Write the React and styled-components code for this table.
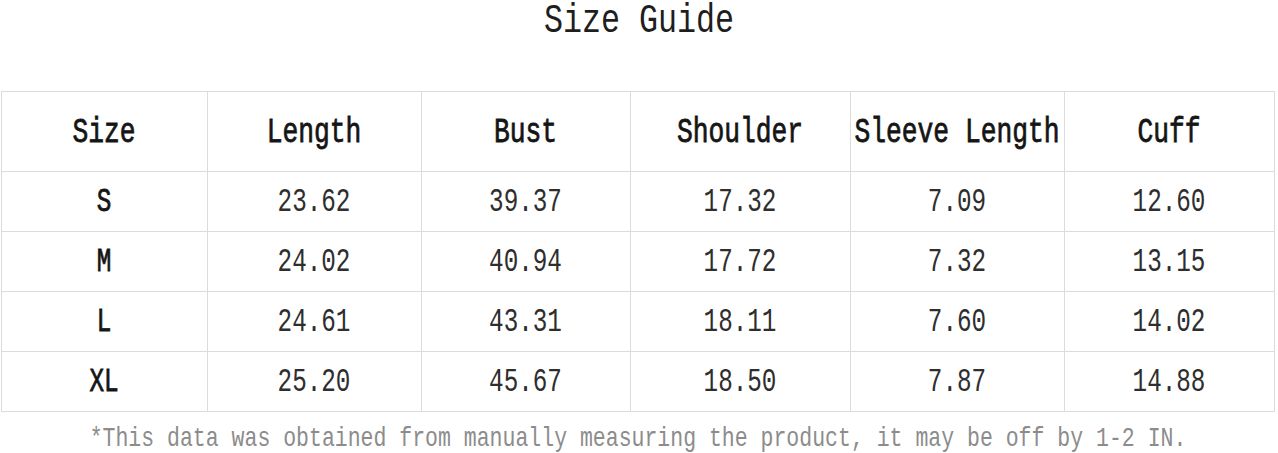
import React from 'react'
import styled, { createGlobalStyle } from 'styled-components'

const Global = createGlobalStyle`
    body {
        margin: 0;
        background: #ffffff;
        font-family: "Liberation Mono", "DejaVu Sans Mono", monospace;
    }
`

const Page = styled.div`
    width: 1278px;
    height: 453px;
    display: flex;
    flex-direction: column;
    align-items: center;
`

const Title = styled.h1`
    margin: 0;
    height: 91px;
    padding-top: 9px;
    box-sizing: border-box;
    font-size: 31.7px;
    font-weight: normal;
    line-height: 26px;
    color: #1e1e1e;
`

// the shot uses a condensed typewriter face, so stretch the glyphs upward
const Tall = styled.span`
    display: inline-block;
    white-space: pre;
    line-height: ${p => p.$lh || '22px'};
    transform: scaleY(${p => p.$stretch || 1.35});
`

const Table = styled.div`
    display: grid;
    grid-template-columns: 206px 214px 209px 220px 214px 210px;
    grid-template-rows: 80px repeat(4, 60px);
    border-top: 1px solid #dcdcdc;
    border-left: 1px solid #dcdcdc;
    margin-left: -3px;
`

const Cell = styled.div`
    display: flex;
    align-items: center;
    justify-content: center;
    border-right: 1px solid #dcdcdc;
    border-bottom: 1px solid #dcdcdc;
    font-size: ${p => (p.$head ? '26.3px' : '24.3px')};
    color: ${p => (p.$strong ? '#151515' : '#2e2e2e')};
    -webkit-text-stroke: ${p => (p.$strong ? '0.6px #151515' : '0')};
    padding-top: ${p => (p.$head ? '2px' : '3px')};
    box-sizing: border-box;
`

const Note = styled.p`
    margin: 17px 0 0;
    font-size: 21.5px;
    line-height: 18px;
    color: #8c8c8c;
    margin-left: -2px;
`

const heads = ['Size', 'Length', 'Bust', 'Shoulder', 'Sleeve Length', 'Cuff']

const rows = [
    ['S', '23.62', '39.37', '17.32', '7.09', '12.60'],
    ['M', '24.02', '40.94', '17.72', '7.32', '13.15'],
    ['L', '24.61', '43.31', '18.11', '7.60', '14.02'],
    ['XL', '25.20', '45.67', '18.50', '7.87', '14.88'],
]

export default function App() {
    return <>
        <Global />
        <Page>
            <Title><Tall $stretch={1.3} $lh="26px">Size Guide</Tall></Title>
            <Table>
                {heads.map(h => <Cell $head $strong key={h}><Tall>{h}</Tall></Cell>)}
                {rows.map(r => r.map((v, i) => (
                    <Cell key={r[0] + i} $strong={i === 0}>
                        <Tall>{v}</Tall>
                    </Cell>
                )))}
            </Table>
            <Note><Tall $stretch={1.25} $lh="18px">*This data was obtained from manually measuring the product, it may be off by 1-2 IN.</Tall></Note>
        </Page>
    </>
}
